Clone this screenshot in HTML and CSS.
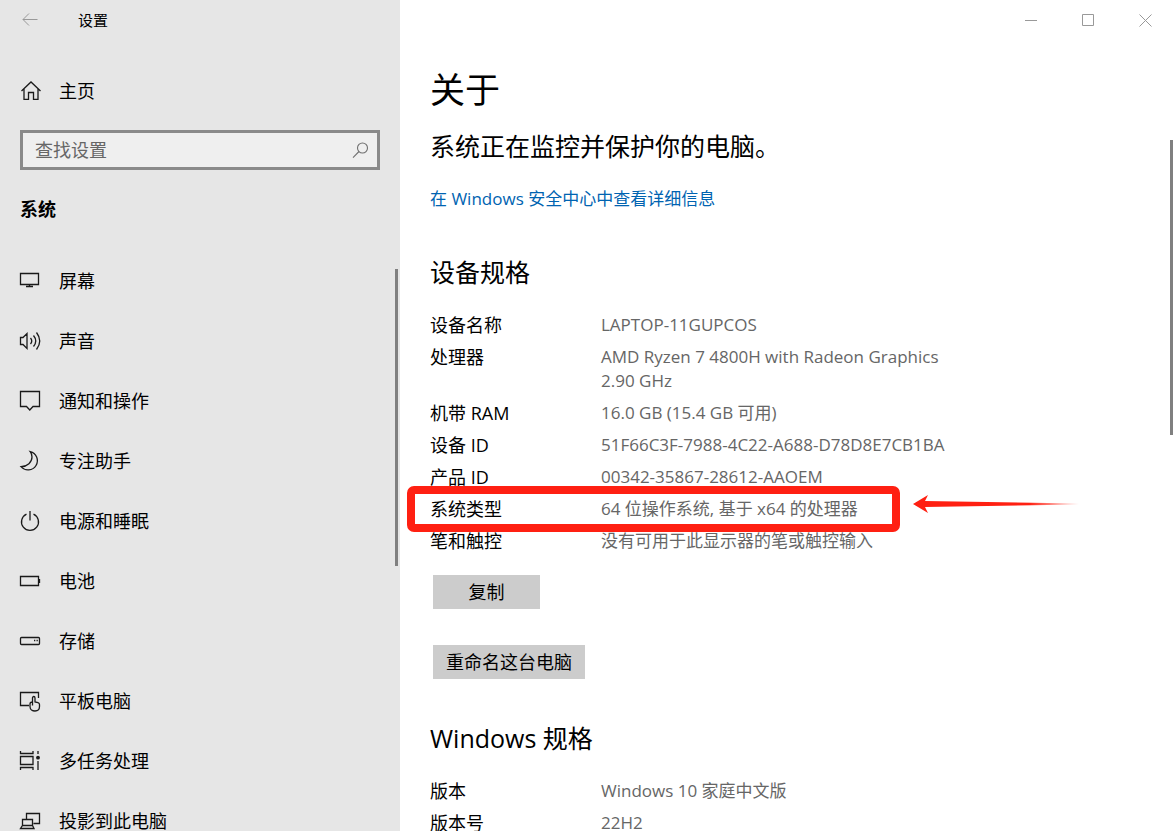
FILE: index.html
```html
<!DOCTYPE html>
<html lang="zh-CN">
<head>
<meta charset="utf-8">
<meta name="viewport" content="width=device-width, initial-scale=1">
<title>设置</title>
<link rel="stylesheet" href="styles.css">
</head>
<body>
<div class="window">
  <aside class="sidebar">
    <header class="titlebar">
      <button class="back" type="button" aria-label="后退">
        <svg class="icon-thin" width="16" height="14" viewBox="0 0 16 14"><path d="M15.500 6.500H1M7 .5l-6 6 6 6"/></svg>
      </button>
      <span class="window-title">设置</span>
    </header>
    <a class="nav-link home" href="#home">
      <svg class="icon" viewBox="0 0 22 22"><path d="M2.500 11L12 2l9.500 9M5 9v10.300h4.500v-6.800h5v6.800h4.500V9"/></svg>
      <span>主页</span>
    </a>
    <div class="search">
      <input class="search-input" type="search" placeholder="查找设置" aria-label="查找设置">
      <svg class="search-icon" width="17" height="17" viewBox="0 0 17 17"><circle cx="10.500" cy="6" r="5"/><path d="M7 9.500L1 15.700"/></svg>
    </div>
    <h2 class="group-title">系统</h2>
    <nav class="nav">
      <a class="nav-link" href="#display"><svg class="icon" viewBox="0 0 22 22"><path d="M1.500 3.500h18v11h-18zM10.500 14.500v2M7 16.500h7"/></svg><span>屏幕</span></a>
      <a class="nav-link" href="#sound"><svg class="icon" viewBox="0 0 22 22"><path d="M1.500 7.500H4l4-4v15l-4-4H1.500zM11.500 8q2.500 3 0 6M14.500 5.500q4.500 5.500 0 11M17.500 2.500q6.500 8.500 0 17"/></svg><span>声音</span></a>
      <a class="nav-link" href="#notifications"><svg class="icon" viewBox="0 0 22 22"><path d="M1.500 1.500h19v15H14L10.800 20l-3.300-3.500h-6z"/></svg><span>通知和操作</span></a>
      <a class="nav-link" href="#focus"><svg class="icon" viewBox="0 0 22 22"><path d="M11.200 1.600A9.300 9.300 0 1 1 2 16.700C8.500 16.500 13 12 13 7c0-2-.7-4-1.800-5.400z"/></svg><span>专注助手</span></a>
      <a class="nav-link" href="#power"><svg class="icon" viewBox="0 0 22 22"><path d="M7.500 4.200a8.500 8.500 0 1 0 7 0M11 1v9.500"/></svg><span>电源和睡眠</span></a>
      <a class="nav-link" href="#battery"><svg class="icon" viewBox="0 0 22 22"><path d="M1.500 6.500h18v9h-18zM20.500 9v4"/></svg><span>电池</span></a>
      <a class="nav-link" href="#storage"><svg class="icon" viewBox="0 0 22 22"><rect x="1.500" y="7.500" width="19" height="7" rx="1"/><path d="M15 10.500h1.300M17.500 10.500h1.300"/></svg><span>存储</span></a>
      <a class="nav-link" href="#tablet"><svg class="icon" viewBox="0 0 22 22"><path d="M10 15.500H1.500v-13h18V8M13.500 15.500V8c0-2 2.500-2 2.500 0v4l3 .7c1 .3 1.500.8 1.500 1.800v2c0 3-2 4.500-4.500 4.500-2.500 0-5-1.500-5-4.500v-2.500c0-1.200 1-2 2.500-2"/></svg><span>平板电脑</span></a>
      <a class="nav-link" href="#multitasking"><svg class="icon" viewBox="0 0 22 22"><path d="M1.500 6.500h12.500v8H1.500zM1.500 1v2.500H14V1M1.500 20v-2.500H14V20M19 1v3M19 11v9"/><circle class="dot" cx="19" cy="7.700" r="1.900"/></svg><span>多任务处理</span></a>
      <a class="nav-link" href="#projecting"><svg class="icon" viewBox="0 0 22 22"><path d="M7.500 9V3.500h13v10h-6M3.500 15.500V9.500h10v6M3.500 15.500h10l1.500 3H1.500z"/></svg><span>投影到此电脑</span></a>
    </nav>
    <div class="thumb thumb-side"></div>
  </aside>

  <main class="content">
    <header class="caption">
      <button class="caption-button" type="button" aria-label="最小化"><svg class="icon-thin" width="13" height="13" viewBox="0 0 13 13"><path d="M0 6.500h12"/></svg></button>
      <button class="caption-button" type="button" aria-label="最大化"><svg class="icon-thin" width="13" height="13" viewBox="0 0 13 13"><path d="M.5 .5h11v11H.5z"/></svg></button>
      <button class="caption-button" type="button" aria-label="关闭"><svg class="icon-thin" width="13" height="13" viewBox="0 0 13 13"><path d="M.5 .5l12 12M12.500 .5l-12 12"/></svg></button>
    </header>
    <div class="page">
      <h1 class="page-title">关于</h1>
      <p class="status">系统正在监控并保护你的电脑。</p>
      <a class="link" href="#security">在 Windows 安全中心中查看详细信息</a>

      <h2 class="section-title">设备规格</h2>
      <dl class="specs">
        <div class="spec"><dt>设备名称</dt><dd>LAPTOP-11GUPCOS</dd></div>
        <div class="spec"><dt>处理器</dt><dd>AMD Ryzen 7 4800H with Radeon Graphics 2.90 GHz</dd></div>
        <div class="spec"><dt>机带 RAM</dt><dd>16.0 GB (15.4 GB 可用)</dd></div>
        <div class="spec"><dt>设备 ID</dt><dd>51F66C3F-7988-4C22-A688-D78D8E7CB1BA</dd></div>
        <div class="spec"><dt>产品 ID</dt><dd>00342-35867-28612-AAOEM</dd></div>
        <div class="spec marked"><dt>系统类型</dt><dd>64 位操作系统, 基于 x64 的处理器
          <svg class="arrow" width="166" height="18" viewBox="0 0 166 18" aria-hidden="true">
            <defs><linearGradient id="fade"><stop offset="0.700" stop-color="#ff2012"/><stop offset="1" stop-color="#ff2012" stop-opacity="0"/></linearGradient></defs>
            <path fill="url(#fade)" d="M0 9L15 0l-3 6L166 8.500v1L12 12l3 6z"/>
          </svg></dd></div>
        <div class="spec"><dt>笔和触控</dt><dd>没有可用于此显示器的笔或触控输入</dd></div>
      </dl>
      <div class="actions">
        <button class="button" type="button">复制</button>
        <button class="button" type="button">重命名这台电脑</button>
      </div>

      <h2 class="section-title">Windows 规格</h2>
      <dl class="specs">
        <div class="spec"><dt>版本</dt><dd>Windows 10 家庭中文版</dd></div>
        <div class="spec"><dt>版本号</dt><dd>22H2</dd></div>
      </dl>
    </div>
    <div class="thumb thumb-main"></div>
  </main>
</div>
</body>
</html>
```
FILE: styles.css
```css
*, *::after { box-sizing: border-box; }

body {
  margin: 0;
  font-family: "Open Sans", "Noto Sans CJK SC", sans-serif;
  font-size: 18px;
  line-height: 24px;
  color: #000;
  background: #fff;
}

h1, h2, p, dl, dd { margin: 0; font-weight: 400; }
button { border: 0; padding: 0; background: none; font: inherit; color: inherit; }
svg { flex: none; fill: none; }

.window { display: flex; height: 100vh; overflow: hidden; }

/* Sidebar */
.sidebar {
  position: relative;
  display: flex;
  flex-direction: column;
  flex: none;
  width: 400px;
  overflow: hidden;
  background: #e6e6e6;
}
.titlebar { display: flex; align-items: center; flex: none; height: 40px; padding-left: 22px; gap: 40px; }
.back { display: flex; }
.window-title { font-size: 15px; }
.icon-thin { stroke: #999; stroke-width: 1; }
.icon { width: 22px; height: 22px; stroke: #1a1a1a; stroke-width: 1.3; }
.dot { fill: #1a1a1a; stroke: none; }

.nav-link {
  display: flex;
  align-items: center;
  flex: none;
  gap: 18px;
  height: 60px;
  padding-left: 19px;
  color: inherit;
  text-decoration: none;
}
.home { margin-top: 21px; }

.search {
  display: flex;
  align-items: center;
  flex: none;
  height: 40px;
  margin: 9px 20px 0;
  padding: 0 8px 0 12px;
  border: 3px solid #8a8a8a;
  background: #efefef;
}
.search-input {
  flex: 1;
  min-width: 0;
  padding: 0;
  border: 0;
  outline: 0;
  background: none;
  font: inherit;
}
.search-input::placeholder { color: #666; opacity: 1; }
.search-icon { stroke: #707070; stroke-width: 1.1; }

.group-title { margin: 27px 20px 30px; font-size: 18px; font-weight: 700; }

.thumb { position: absolute; width: 3px; background: #808080; }
.thumb-side { top: 269px; right: 2px; height: 297px; }
.thumb-main { top: 140px; right: 1px; height: 295px; }

/* Content */
.content { position: relative; flex: 1; min-width: 0; overflow: hidden; }
.caption { display: flex; justify-content: flex-end; height: 40px; }
.caption-button { display: flex; align-items: center; justify-content: center; width: 57px; }

.page { padding: 25px 30px 0; }
.page-title { font-size: 35px; line-height: 50px; }
.status { margin-top: 13px; font-size: 25px; line-height: 36px; }
.link { display: block; margin-top: 23px; padding-bottom: 2px; font-size: 17px; color: #0063b1; text-decoration: none; }
.section-title { margin-top: 41px; font-size: 25px; line-height: 36px; }

.specs { max-width: 523px; margin-top: 19px; }
.spec { display: grid; grid-template-columns: 171px 1fr; padding: 4px 0; }
.spec dd { font-size: 17px; color: #666; }
.marked { position: relative; }
.marked::after {
  content: "";
  position: absolute;
  top: -7px;
  left: -23px;
  width: 493px;
  height: 46px;
  border: 8px solid #ff2012;
  border-radius: 7px;
}
.arrow { position: absolute; top: 2px; left: 483px; }

.actions { display: flex; flex-direction: column; align-items: flex-start; gap: 36px; margin: 18px 3px 0; }
.button { min-width: 107px; height: 34px; padding: 0 13px; background: #ccc; }
```
